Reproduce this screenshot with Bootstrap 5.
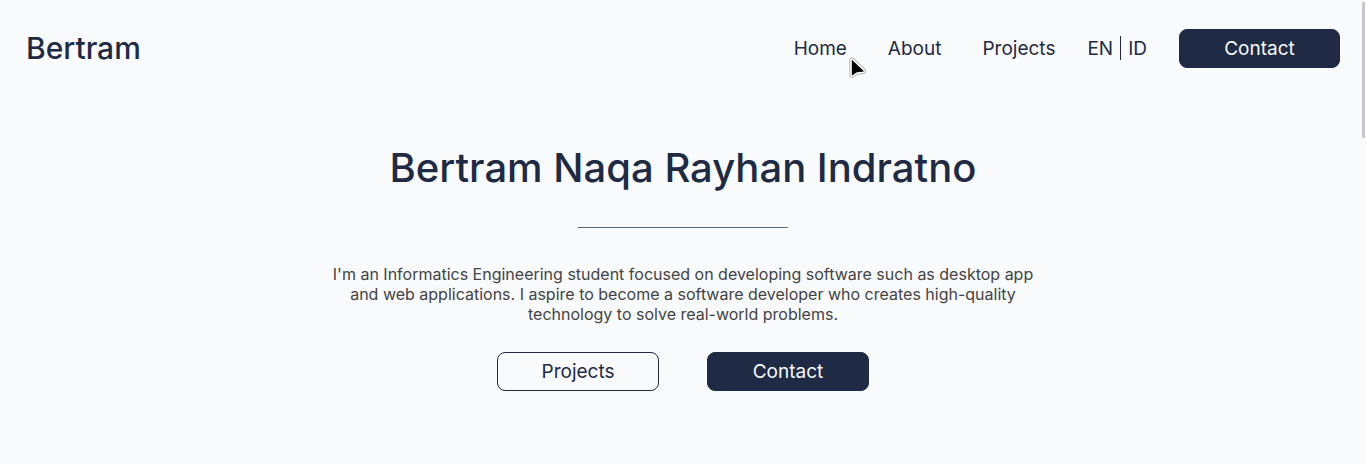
<!DOCTYPE html>
<html lang="en">
<head>
<meta charset="utf-8">
<meta name="viewport" content="width=device-width, initial-scale=1">
<title>Bertram</title>
<link rel="stylesheet" href="https://cdn.jsdelivr.net/npm/bootstrap@5.3.0/dist/css/bootstrap.min.css">
<style>
body{font-family:Inter,"Liberation Sans",sans-serif;background:#f8fafc;color:#1f2a44}
.site-nav{padding:28px 26px}
.site-nav .navbar-brand{font-size:30px;font-weight:450;color:inherit;line-height:40px}
.site-nav a.nav-link,.lang{font-size:19px;line-height:26px;padding-top:1px}
.site-nav a.nav-link,.lang a{color:inherit;text-decoration:none}
.links{gap:41px;margin-right:32px}
.lang{gap:7px;margin-right:32px}
.lang .vr{width:1px;height:24px;opacity:1;align-self:start}
.action{width:162px;height:39px;padding:2px 0 0;font-size:19px;border:1px solid #1f2a44;border-radius:8px;color:#1f2a44}
.site-nav .action{width:161px}
.action.solid,.action:hover{background:#1f2a44;color:#f8fafc}
.hero{padding-top:42px}
.hero h1{font-size:40px;font-weight:450;line-height:60px}
.rule{width:210px;height:1px;opacity:1;border:0;background:#556b7a;margin:29px auto 36px}
.intro{max-width:704px;font-size:16px;line-height:20px;color:#444;margin-bottom:28px}
.thumb{position:fixed;right:1px;top:2px;width:3px;height:136px;border-radius:1px;background:#c7c8ce}
.pointer{position:fixed;left:848px;top:54px}
</style>
</head>
<body>
<nav class="navbar navbar-expand site-nav">
<a class="navbar-brand p-0 me-auto" href="#">Bertram</a>
<div class="d-flex links">
<a class="nav-link px-0 pb-0" href="#">Home</a>
<a class="nav-link px-0 pb-0" href="#about">About</a>
<a class="nav-link px-0 pb-0" href="#projects">Projects</a>
</div>
<div class="d-flex lang"><a href="#en">EN</a><span class="vr"></span><a href="#id">ID</a></div>
<button class="btn action solid" type="button">Contact</button>
</nav>
<main class="hero text-center">
<h1 class="m-0">Bertram Naqa Rayhan Indratno</h1>
<hr class="rule">
<p class="intro mx-auto">I'm an Informatics Engineering student focused on developing software such as desktop app and web applications. I aspire to become a software developer who creates high-quality technology to solve real-world problems.</p>
<div class="d-flex justify-content-center gap-5">
<button class="btn action" type="button">Projects</button>
<button class="btn action solid" type="button">Contact</button>
</div>
</main>
<div class="thumb"></div>
<svg class="pointer" width="22" height="28" viewBox="0 0 22 28" aria-hidden="true"><path d="M3 6V21Q3.2 23 5 22L9.3 19L15.5 18.2Q17.5 17.8 16 16.2L4.8 5.4Q3.3 4.3 3 6Z" fill="#000" stroke="#999" stroke-width="3" stroke-linejoin="round"/><path d="M3 6V21Q3.2 23 5 22L9.3 19L15.5 18.2Q17.5 17.8 16 16.2L4.8 5.4Q3.3 4.3 3 6Z" fill="#000" stroke="#fff" stroke-width="1.6" stroke-linejoin="round"/></svg>
<script src="https://cdn.jsdelivr.net/npm/bootstrap@5.3.0/dist/js/bootstrap.bundle.min.js"></script>
</body>
</html>
